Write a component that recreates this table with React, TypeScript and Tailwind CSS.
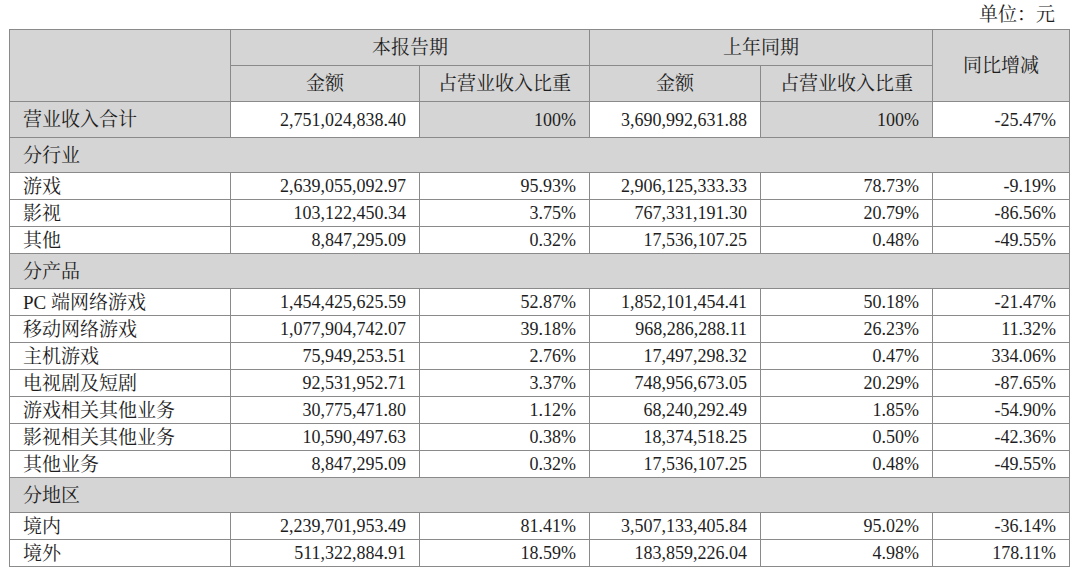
import React from "react";

type Row = [string, string, string, string, string, string];

const sections: { title: string; rows: Row[] }[] = [
  {
    title: "分行业",
    rows: [
      ["游戏", "2,639,055,092.97", "95.93%", "2,906,125,333.33", "78.73%", "-9.19%"],
      ["影视", "103,122,450.34", "3.75%", "767,331,191.30", "20.79%", "-86.56%"],
      ["其他", "8,847,295.09", "0.32%", "17,536,107.25", "0.48%", "-49.55%"],
    ],
  },
  {
    title: "分产品",
    rows: [
      ["PC 端网络游戏", "1,454,425,625.59", "52.87%", "1,852,101,454.41", "50.18%", "-21.47%"],
      ["移动网络游戏", "1,077,904,742.07", "39.18%", "968,286,288.11", "26.23%", "11.32%"],
      ["主机游戏", "75,949,253.51", "2.76%", "17,497,298.32", "0.47%", "334.06%"],
      ["电视剧及短剧", "92,531,952.71", "3.37%", "748,956,673.05", "20.29%", "-87.65%"],
      ["游戏相关其他业务", "30,775,471.80", "1.12%", "68,240,292.49", "1.85%", "-54.90%"],
      ["影视相关其他业务", "10,590,497.63", "0.38%", "18,374,518.25", "0.50%", "-42.36%"],
      ["其他业务", "8,847,295.09", "0.32%", "17,536,107.25", "0.48%", "-49.55%"],
    ],
  },
  {
    title: "分地区",
    rows: [
      ["境内", "2,239,701,953.49", "81.41%", "3,507,133,405.84", "95.02%", "-36.14%"],
      ["境外", "511,322,884.91", "18.59%", "183,859,226.04", "4.98%", "178.11%"],
    ],
  },
];

const cell = "border border-[#8a8a8a] px-[13px] py-0 leading-none";
const cjk = "text-[19px]";

export default function App() {
  return (
    <div
      className="w-[1080px] h-[573px] bg-white text-[#1e1e1e] text-[18px] overflow-hidden"
      style={{ fontFamily: '"Liberation Serif", "Noto Serif CJK SC", "Noto Sans CJK SC", serif' }}
    >
      <div className={`h-[29px] flex items-center justify-end pr-[25px] pt-[1px] ${cjk}`}>单位：元</div>
      <table className="ml-[9px] w-[1060px] border-collapse table-fixed">
        <colgroup>
          <col className="w-[221px]" />
          <col className="w-[189px]" />
          <col className="w-[170px]" />
          <col className="w-[171px]" />
          <col className="w-[172px]" />
          <col className="w-[137px]" />
        </colgroup>
        <tbody>
          <tr className={`h-[36px] bg-[#d5d5d5] ${cjk}`}>
            <td className={cell} rowSpan={2}></td>
            <td className={`${cell} text-center`} colSpan={2}>本报告期</td>
            <td className={`${cell} text-center`} colSpan={2}>上年同期</td>
            <td className={`${cell} text-center`} rowSpan={2}>同比增减</td>
          </tr>
          <tr className={`h-[36px] bg-[#d5d5d5] ${cjk}`}>
            <td className={`${cell} text-center`}>金额</td>
            <td className={`${cell} text-center`}>占营业收入比重</td>
            <td className={`${cell} text-center`}>金额</td>
            <td className={`${cell} text-center`}>占营业收入比重</td>
          </tr>
          <tr className="h-[36px]">
            <td className={`${cell} ${cjk} bg-[#d5d5d5]`}>营业收入合计</td>
            <td className={`${cell} text-right bg-white`}>2,751,024,838.40</td>
            <td className={`${cell} text-right bg-[#d5d5d5]`}>100%</td>
            <td className={`${cell} text-right bg-white`}>3,690,992,631.88</td>
            <td className={`${cell} text-right bg-[#d5d5d5]`}>100%</td>
            <td className={`${cell} text-right bg-white`}>-25.47%</td>
          </tr>
          {sections.map((s) => (
            <React.Fragment key={s.title}>
              <tr className="h-[35px] bg-[#d5d5d5]">
                <td className={`${cell} ${cjk}`} colSpan={6}>{s.title}</td>
              </tr>
              {s.rows.map((r) => (
                <tr key={r[0]} className="h-[27px]">
                  <td className={`${cell} ${cjk}`}>{r[0]}</td>
                  <td className={`${cell} text-right`}>{r[1]}</td>
                  <td className={`${cell} text-right`}>{r[2]}</td>
                  <td className={`${cell} text-right`}>{r[3]}</td>
                  <td className={`${cell} text-right`}>{r[4]}</td>
                  <td className={`${cell} text-right`}>{r[5]}</td>
                </tr>
              ))}
            </React.Fragment>
          ))}
        </tbody>
      </table>
    </div>
  );
}
